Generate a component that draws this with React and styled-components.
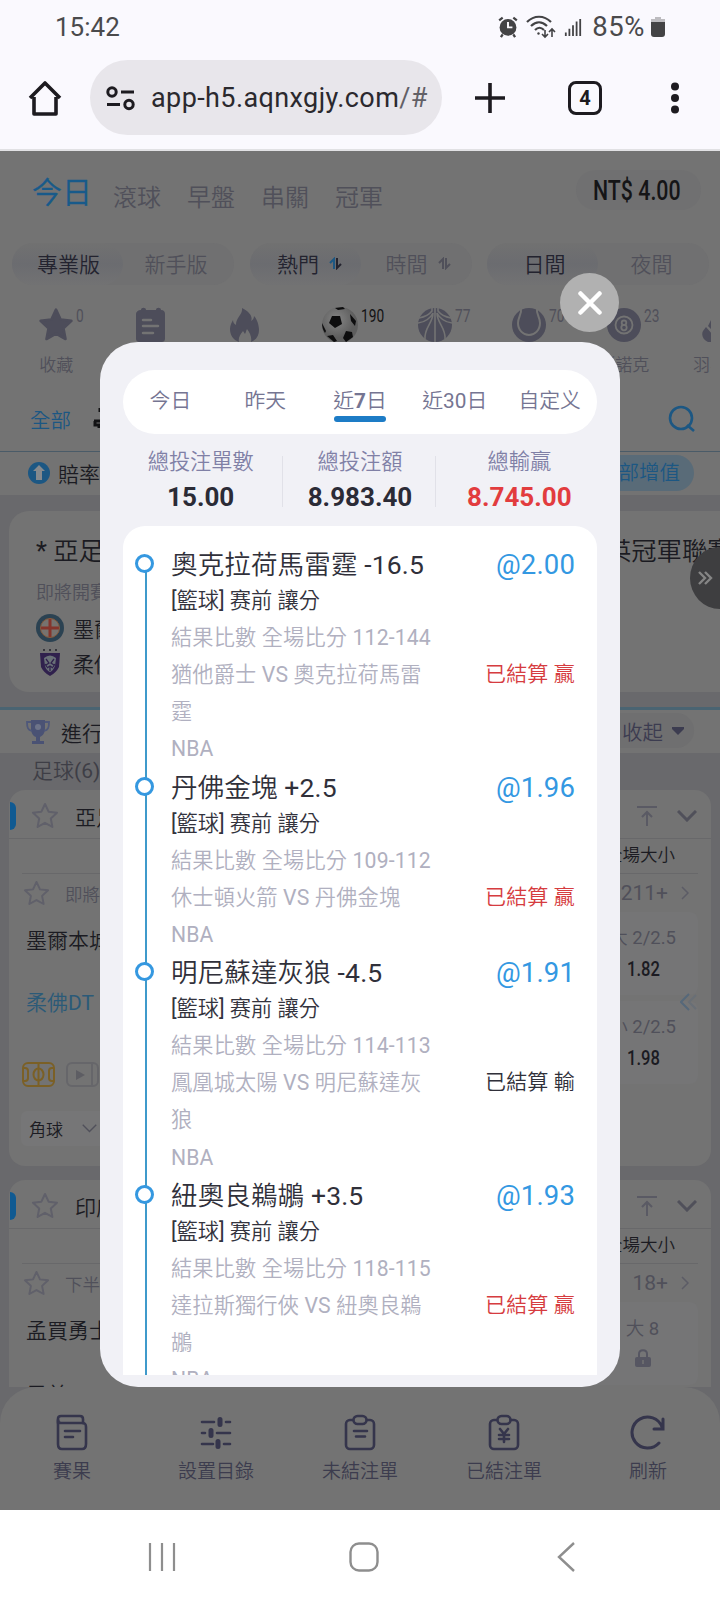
import styled, { createGlobalStyle } from "styled-components";

const GlobalStyle = createGlobalStyle`
    :root {
        --blue: #1c5783;
        --ink: #1b1b22;
        --grey: #50505a;
        --card: #737373;
        --base: #69696c;
        --line: #68686a;
    }

    *,
    *::before,
    *::after {
        box-sizing: border-box;
    }

    body {
        margin: 0;
        font-family: Roboto, "Noto Sans CJK TC DemiLight", "Noto Sans CJK TC", sans-serif;
    }

    p {
        margin: 0;
    }

    svg {
        display: block;
        flex-shrink: 0;
    }
`;

const Star = ({ size = 28, fill = "none", color = "#60606a" }) => (
    <svg width={size} height={size} viewBox="0 0 28 28" fill={fill} stroke={color} strokeWidth="2" strokeLinejoin="round">
        <path d="M14 2l3.6 7.7 8.4 1-6.200 5.800 1.600 8.400-7.400-4.100-7.400 4.100 1.600-8.400L2 10.700l8.400-1z" />
    </svg>
);

const SortIcon = ({ left, right }) => (
    <svg width="13" height="13" viewBox="0 0 13 13" fill="none" strokeWidth="2">
        <path d="M5 12V2L1 6" stroke={left} />
        <path d="M8 1v10l4-4" stroke={right} />
    </svg>
);

const NoteIcon = () => (
    <svg width="34" height="36" viewBox="0 0 34 36">
        <path d="M7 3c0-3 5-3 5 0h10c0-3 5-3 5 0 3 0 4 2 4 4v24c0 3-1 4-4 4H6c-3 0-4-1-4-4V7c0-2 2-4 5-4z" fill="#4d4d5a" />
        <path d="M9 13h8M9 19h15M9 26h10" stroke="#737373" strokeWidth="2.500" strokeLinecap="round" />
    </svg>
);

const FireIcon = () => (
    <svg width="34" height="36" viewBox="0 0 34 36" fill="#4d4d5a">
        <path d="M14 1c8 4 11 9 9 13 2-1 3-3 3-5 3 3 5 9 5 14 0 6-3 10-8 12 1-5-1-9-4-13-1 2-1 3-2 5l-2-3c-3 4-5 7-4 11C5 33 2 28 2 22c0-4 2-7 3-9 0 2 1 4 3 5 0-8 7-10 6-17z" />
    </svg>
);

const FootballIcon = () => (
    <svg width="38" height="38" viewBox="0 0 38 38">
        <defs>
            <radialGradient id="ball" cx="40%" cy="35%">
                <stop offset="0" stopColor="#858585" />
                <stop offset="1" stopColor="#5e5e5e" />
            </radialGradient>
        </defs>
        <circle cx="19" cy="19" r="18" fill="url(#ball)" />
        <path d="M11 10l8 0 2 8-7 4-6-5zM29 8l6 7-1 5-4-5zM25 25l6 1 1 5-7 5-3-4zM1 17l4 8-1 2c-2-3-3-6-3-10zM12 29l4 6-3 1-7-6zM14 2l8-1 2 2-7 1z" fill="#0d0d0e" />
    </svg>
);

const BasketballIcon = () => (
    <svg width="36" height="36" viewBox="0 0 36 36">
        <circle cx="18" cy="18" r="17" fill="#4d4d5a" />
        <path d="M18 1v34M15 0v4C12 8 7 10 2 11M21 0v4c3 4 8 6 13 7M1 16C8 15 13 12 16 6c0 10-9 15-8 26M35 16c-7-1-12-4-15-10 0 10 9 15 8 26" stroke="#737373" strokeWidth="1.600" fill="none" />
    </svg>
);

const TennisIcon = () => (
    <svg width="36" height="36" viewBox="0 0 36 36">
        <circle cx="18" cy="18" r="17" fill="#4d4d5a" />
        <path d="M10 1c1 6-3 9-3 15 0 7 5 12 11 12s11-5 11-12c0-6-4-9-3-15" stroke="#737373" strokeWidth="2" fill="none" />
    </svg>
);

const SnookerIcon = () => (
    <svg width="36" height="36" viewBox="0 0 36 36">
        <circle cx="18" cy="18" r="17" fill="#4d4d5a" />
        <g stroke="#737373" strokeWidth="1.800" fill="none">
            <circle cx="18" cy="18" r="8.500" />
            <circle cx="18" cy="15.800" r="2.300" />
            <circle cx="18" cy="20.600" r="2.700" />
        </g>
    </svg>
);

const ShuttleIcon = () => (
    <svg width="36" height="36" viewBox="0 0 36 36" fill="#4d4d5a">
        <path d="M12 11v12l-4-4zM3 24l3-4 6 7v8H8c-5-2-7-7-5-11z" />
    </svg>
);

const Chevron = ({ w = 20, h = 12, color = "#50505a", stroke = 3 }) => (
    <svg width={w} height={h} viewBox="0 0 20 12" fill="none" stroke={color} strokeWidth={stroke}>
        <path d="M1 1l9 9 9-9" />
    </svg>
);

const ArrowRight = () => (
    <svg width="8" height="14" viewBox="0 0 8 14" fill="none" stroke="#5c5c66" strokeWidth="1.500">
        <path d="M1 1l6 6-6 6" />
    </svg>
);

const TopIcon = () => (
    <svg width="20" height="22" viewBox="0 0 20 22" fill="none" stroke="#5a5a64" strokeWidth="2">
        <path d="M0 2h20M10 21V7M5 12l5-5 5 5" />
    </svg>
);

const topTabs = ["滾球", "早盤", "串關", "冠軍"];

const sports = [
    { key: 1, icon: <Star size={36} fill="#4d4d5a" color="#4d4d5a" />, count: "0", label: "收藏" },
    { key: 2, icon: <NoteIcon /> },
    { key: 3, icon: <FireIcon /> },
    { key: 4, icon: <FootballIcon />, count: "190", active: true },
    { key: 5, icon: <BasketballIcon />, count: "77" },
    { key: 6, icon: <TennisIcon />, count: "70" },
    { key: 7, icon: <SnookerIcon />, count: "23", label: "斯諾克" },
    { key: 8, icon: <ShuttleIcon />, label: "羽毛球" },
];

const rangeTabs = ["今日", "昨天", "近7日", "近30日", "自定义"];

const bets = [
    { key: 1, title: "奧克拉荷馬雷霆 -16.5", odds: "@2.00", score: "112-144", match: "猶他爵士 VS 奧克拉荷馬雷霆", win: true },
    { key: 2, title: "丹佛金塊 +2.5", odds: "@1.96", score: "109-112", match: "休士頓火箭 VS 丹佛金塊", win: true },
    { key: 3, title: "明尼蘇達灰狼 -4.5", odds: "@1.91", score: "114-113", match: "鳳凰城太陽 VS 明尼蘇達灰狼", win: false },
    { key: 4, title: "紐奧良鵜鶘 +3.5", odds: "@1.93", score: "118-115", match: "達拉斯獨行俠 VS 紐奧良鵜鶘", win: true },
];

const navItems = [
    {
        key: 1,
        text: "賽果",
        icon: (
            <>
                <path d="M4 9V5c0-2 1-3 3-3h19c2 0 3 1 3 3v4" />
                <path d="M4 7v23c0 3 1 5 4 5h20c3 0 4-2 4-5V13c0-3-1-4-4-4H7c-2 0-3-1-3-3z" />
                <path d="M11 17h15M11 23h8" />
            </>
        ),
    },
    {
        key: 2,
        text: "設置目錄",
        icon: (
            <>
                <path d="M4 8h12M28 8h4M4 19h3M19 19h13M4 30h11M26 30h6" />
                <path d="M22 5.500v5M13 16.500v5M20 27.500v5" strokeWidth="5" />
            </>
        ),
    },
    {
        key: 3,
        text: "未結注單",
        icon: (
            <>
                <rect x="4" y="6" width="28" height="29" rx="4" />
                <rect x="11.500" y="2" width="13" height="8" rx="4" fill="#737373" />
                <path d="M12 17h13M14 22.500h9" />
            </>
        ),
    },
    {
        key: 4,
        text: "已結注單",
        icon: (
            <>
                <rect x="4" y="6" width="28" height="29" rx="4" />
                <rect x="11.500" y="2" width="13" height="8" rx="4" fill="#737373" />
                <path d="M14 15l4 5 4-5M13 21h10M13 25h10M18 20v8" />
            </>
        ),
    },
    {
        key: 5,
        text: "刷新",
        icon: <path d="M32 13A15.500 15.500 0 1 0 29 29M24 15h9V5" strokeWidth="3" strokeLinejoin="miter" />,
    },
];

const League = ({ name, status, more, home, away, children, footer }) => (
    <LeagueCard>
        <LeagueHead>
            <i />
            <Star />
            <p>{name}</p>
            <TopIcon />
            <Chevron />
        </LeagueHead>
        <MarketHead>全場大小</MarketHead>
        <MatchHead>
            <Star size={27} />
            <p className="status">{status}</p>
            <p className="more">{more}</p>
            <ArrowRight />
        </MatchHead>
        <MatchBody>
            <Teams>
                <p>{home}</p>
                {away}
                {footer}
            </Teams>
            <OddsColumn>{children}</OddsColumn>
        </MatchBody>
    </LeagueCard>
);

const App = () => {
    return (
        <Phone>
            <GlobalStyle />
            <StatusBar>
                <p>15:42</p>
                <div>
                    <svg width="20" height="23" viewBox="0 0 22 26" fill="none">
                        <circle cx="11" cy="14" r="9.500" fill="#434345" />
                        <path d="M1 6l4-3M21 6l-4-3M5 22l-2 3M17 22l2 3" stroke="#434345" strokeWidth="2.600" />
                        <path d="M11 8v6h5" stroke="#faf9fe" strokeWidth="2.200" />
                    </svg>
                    <svg width="30" height="24" viewBox="0 0 30 24" fill="none" stroke="#434345" strokeWidth="2.200">
                        <path d="M1 7c7-7 17-7 24 0M5 11c5-5 11-5 16 0M9 15c3-3 6-3 9 0" />
                        <path d="M19 15v7M16 19l3 3 3-3M26 22v-8M23 17l3-3 3 3" strokeWidth="1.600" />
                        <circle cx="12.500" cy="18.500" r="1.200" fill="#434345" stroke="none" />
                    </svg>
                    <svg width="18" height="20" viewBox="0 0 20 20" stroke="#434345" strokeWidth="2">
                        <path d="M2 16v4M6 12v8M10 8v12M14 4v16M18 1v19" />
                    </svg>
                    <p>85%</p>
                    <svg width="14" height="20" viewBox="0 0 14 20">
                        <path d="M4 0h6v2h4v4H0V2h4z" fill="#bdbcc0" />
                        <path d="M0 5h14v12q0 3-3 3H3q-3 0-3-3z" fill="#434345" />
                    </svg>
                </div>
            </StatusBar>
            <Browser>
                <svg width="34" height="36" viewBox="0 0 34 36" fill="none" stroke="#1d1b20" strokeWidth="3.600" strokeLinejoin="round">
                    <path d="M2 18L17 3l15 15M6 17v17h22V17" />
                </svg>
                <UrlBar>
                    <svg width="29" height="26" viewBox="0 0 29 26" fill="none" stroke="#1d1b20" strokeWidth="3">
                        <circle cx="6" cy="7" r="4.200" />
                        <circle cx="23" cy="19.500" r="4.200" />
                        <path d="M15 7h13M1 19.500h13" />
                    </svg>
                    <p>
                        app-h5.aqnxgjy.com<span>/#</span>
                    </p>
                </UrlBar>
                <svg className="plus" width="30" height="30" viewBox="0 0 30 30" stroke="#1d1b20" strokeWidth="3.600">
                    <path d="M15 0v30M0 15h30" />
                </svg>
                <TabCount>4</TabCount>
                <svg width="10" height="32" viewBox="0 0 10 32" fill="#1d1b20">
                    <circle cx="5" cy="4.500" r="4" />
                    <circle cx="5" cy="16" r="4" />
                    <circle cx="5" cy="27.500" r="4" />
                </svg>
            </Browser>

            <Page>
                <TopTabs>
                    <p className="active">今日</p>
                    {topTabs.map((text) => (
                        <p key={text}>{text}</p>
                    ))}
                    <Balance>
                        <Condensed $size={27} $width={86}>NT$ 4.00</Condensed>
                    </Balance>
                </TopTabs>
                <Segments>
                    <Segment>
                        <SegmentItem $active $shift={2}>專業版</SegmentItem>
                        <SegmentItem $shift={-5}>新手版</SegmentItem>
                    </Segment>
                    <Segment>
                        <SegmentItem $active $shift={9}>
                            熱門 <SortIcon left="#1c5783" right="#23232f" />
                        </SegmentItem>
                        <SegmentItem $shift={4}>
                            時間 <SortIcon left="#50505a" right="#50505a" />
                        </SegmentItem>
                    </Segment>
                    <Segment>
                        <SegmentItem $active $shift={4}>日間</SegmentItem>
                        <SegmentItem $shift={-4}>夜間</SegmentItem>
                    </Segment>
                </Segments>
                <Sports>
                    {sports.map((sport) => (
                        <Sport key={sport.key} $active={sport.active}>
                            <div>
                                {sport.icon}
                                {sport.count && <span>{sport.count}</span>}
                            </div>
                            <p>{sport.label}</p>
                        </Sport>
                    ))}
                </Sports>
                <Filter>
                    <p>全部</p>
                    <svg width="16" height="24" viewBox="0 0 16 24" fill="none" stroke="#121214" strokeWidth="3">
                        <path d="M8 1v4M2 14h12M3 14v4h4v3" />
                    </svg>
                    <svg className="search" width="28" height="28" viewBox="0 0 28 28" fill="none" stroke="#1c5783" strokeWidth="2.600">
                        <circle cx="14" cy="13" r="11" />
                        <path d="M20 20l7 6" />
                    </svg>
                </Filter>
                <OddsBar>
                    <svg width="22" height="22" viewBox="0 0 22 22">
                        <circle cx="11" cy="11" r="11" fill="#1c5783" />
                        <path d="M11 3l6 6h-3v9H8V9H5z" fill="#85898d" />
                    </svg>
                    <p>賠率</p>
                    <span>全部增值</span>
                </OddsBar>
                <Featured>
                    <FeaturedCard>
                        <div className="title">
                            <p>* 亞足</p>
                            <p>英冠軍聯賽</p>
                        </div>
                        <p className="time">即將開賽</p>
                        <div className="team">
                            <svg width="28" height="28" viewBox="0 0 28 28">
                                <circle cx="14" cy="14" r="14" fill="#2b4252" />
                                <circle cx="14" cy="14" r="9.500" fill="#77736f" />
                                <path d="M14 5v18M5 14h18" stroke="#85352c" strokeWidth="3" />
                                <circle cx="14" cy="14" r="9.500" fill="none" stroke="#85593b" strokeWidth="1" />
                            </svg>
                            <p>墨爾</p>
                        </div>
                        <div className="team">
                            <svg width="28" height="28" viewBox="0 0 28 28">
                                <path d="M4 4h20l-1 14q-3 6-9 9-6-3-9-9z" fill="#30214d" />
                                <path d="M8 9q6-5 12 0l-1 8q-2 5-5 6-4-2-5-6z" fill="#697077" />
                                <path d="M10 10l3 4-3 2M18 10l-3 4 3 2M11 19l3-2 3 2M14 17v5M9 15l2 3M19 15l-2 3" stroke="#30214d" strokeWidth="1.300" fill="none" />
                                <path d="M7 1h2M13 1h2M19 1h2" stroke="#35353c" strokeWidth="2" />
                            </svg>
                            <p>柔佛</p>
                        </div>
                    </FeaturedCard>
                </Featured>
                <Running>
                    <svg width="26" height="26" viewBox="0 0 26 26">
                        <path d="M6 1h14v8c0 6-3 8-5 9v4h4v3H7v-3h4v-4c-3-1-5-4-5-9z" fill="#4a5274" />
                        <path d="M6 3H2c0 6 1 8 5 9M20 3h4c0 6-1 8-5 9" stroke="#4f587a" strokeWidth="1.800" fill="none" />
                        <circle cx="13" cy="8" r="3" fill="#6e7489" />
                    </svg>
                    <p>進行</p>
                    <span>
                        收起
                        <svg width="12" height="9" viewBox="0 0 12 9">
                            <path d="M0 1h12v2L6 9 0 3z" fill="#3c3c50" />
                        </svg>
                    </span>
                </Running>
                <Leagues>
                    <p className="group">足球(6)</p>
                    <League
                        name="亞足"
                        status="即將"
                        more="211+"
                        home="墨爾本城"
                        away={<p className="blue">柔佛DT</p>}
                        footer={
                            <>
                                <Media>
                                    <svg width="33" height="25" viewBox="0 0 33 25" fill="none" stroke="#7b6026" strokeWidth="2">
                                        <rect x="1" y="1" width="31" height="23" rx="5" />
                                        <path d="M16.500 1v23M1 6h2q3 0 3 3v7q0 3-3 3H1M32 6h-2q-3 0-3 3v7q0 3 3 3h2" />
                                        <ellipse cx="16.500" cy="12.500" rx="5" ry="6" />
                                    </svg>
                                    <svg width="33" height="25" viewBox="0 0 33 25" fill="none" stroke="#66666a" strokeWidth="2">
                                        <rect x="1" y="1" width="31" height="23" rx="5" />
                                        <path d="M26 1v23" />
                                        <path d="M10 8l9 5-9 5z" fill="#5d5d63" stroke="none" />
                                    </svg>
                                </Media>
                                <CornerSelect>
                                    角球 <Chevron w={15} h={9} stroke={1.8} />
                                </CornerSelect>
                            </>
                        }
                    >
                        <OddsBox>
                            <p>大 2/2.5</p>
                            <Condensed $size={21} $width={30}>1.82</Condensed>
                        </OddsBox>
                        <OddsBox>
                            <p>小 2/2.5</p>
                            <Condensed $size={21} $width={30}>1.98</Condensed>
                        </OddsBox>
                        <Swipe width="18" height="18" viewBox="0 0 18 18" fill="none" strokeWidth="2">
                            <path d="M9 1L1 9l8 8" stroke="#56687a" />
                            <path d="M16 2L9 9l7 7" stroke="#696f76" />
                        </Swipe>
                    </League>
                    <League name="印度" status="下半" more="18+" home="孟買勇士" away={<p className="next">果美ANV</p>}>
                        <OddsBox $locked>
                            <p>大 8</p>
                            <svg width="16" height="18" viewBox="0 0 16 18">
                                <path d="M4 9V5c0-5 8-5 8 0v4" stroke="#565662" strokeWidth="2" fill="none" />
                                <rect x="0" y="8" width="16" height="10" rx="2" fill="#565662" />
                                <path d="M8 11v4" stroke="#737373" strokeWidth="1.500" />
                            </svg>
                        </OddsBox>
                    </League>
                </Leagues>
                <BottomNav>
                    {navItems.map((item) => (
                        <NavItem key={item.key}>
                            <svg width="36" height="37" viewBox="0 0 36 37" fill="none" stroke="#35354c" strokeWidth="2.600" strokeLinecap="round" strokeLinejoin="round">
                                {item.icon}
                            </svg>
                            <p>{item.text}</p>
                        </NavItem>
                    ))}
                </BottomNav>
                <FloatButton>
                    <svg width="15" height="14" viewBox="0 0 15 14" fill="none" stroke="#858585" strokeWidth="2.400">
                        <path d="M1 1l6 6-6 6M7 1l6 6-6 6" />
                    </svg>
                </FloatButton>
            </Page>

            <SystemNav>
                <svg width="28" height="30" viewBox="0 0 28 30" stroke="#8e8e8e" strokeWidth="2.200">
                    <path d="M2 1v28M14 1v28M26 1v28" />
                </svg>
                <svg className="home" width="30" height="30" viewBox="0 0 30 30" fill="none" stroke="#8e8e8e" strokeWidth="2.400">
                    <rect x="1.500" y="1.500" width="27" height="27" rx="8.500" />
                </svg>
                <svg width="18" height="30" viewBox="0 0 18 30" fill="none" stroke="#8e8e8e" strokeWidth="2.400">
                    <path d="M17 1L2 15l15 14" />
                </svg>
            </SystemNav>

            <Modal>
                <CloseButton>
                    <svg width="24" height="24" viewBox="0 0 24 24" stroke="#fff" strokeWidth="4.500" strokeLinecap="round">
                        <path d="M2.500 2.500l19 19M21.500 2.500l-19 19" />
                    </svg>
                </CloseButton>
                <RangeTabs>
                    {rangeTabs.map((text, index) => (
                        <RangeTab key={text} $active={index === 2}>
                            {index === 2 ? (
                                <>
                                    近<b>7</b>日
                                </>
                            ) : (
                                text
                            )}
                        </RangeTab>
                    ))}
                </RangeTabs>
                <Summary>
                    <div>
                        <p>總投注單數</p>
                        <b>15.00</b>
                    </div>
                    <div className="middle">
                        <p>總投注額</p>
                        <b>8.983.40</b>
                    </div>
                    <div>
                        <p>總輸贏</p>
                        <b className="red">8.745.00</b>
                    </div>
                </Summary>
                <BetList>
                    {bets.map((bet) => (
                        <Bet key={bet.key}>
                            <BetRow $title>
                                <p>{bet.title}</p>
                                <span>{bet.odds}</span>
                            </BetRow>
                            <p className="type">[籃球] 赛前 讓分</p>
                            <p>結果比數 全場比分 {bet.score}</p>
                            <BetRow $win={bet.win}>
                                <p>{bet.match}</p>
                                <span>{bet.win ? "已結算 贏" : "已結算 輸"}</span>
                            </BetRow>
                            <p>NBA</p>
                        </Bet>
                    ))}
                </BetList>
            </Modal>
        </Phone>
    );
};

export default App;

const Phone = styled.div`
    position: relative;
    display: flex;
    flex-direction: column;
    width: 720px;
    height: 1600px;
    overflow: hidden;
    background: #fff;
`;

const StatusBar = styled.div`
    height: 53px;
    padding: 0 55px 0 55px;
    background: #faf9fe;
    color: #4a4a4c;
    font-size: 26px;
    display: flex;
    align-items: center;
    justify-content: space-between;

    div {
        display: flex;
        align-items: center;
        gap: 8px;
    }

    div p {
        margin: 0 -2px 0 2px;
        font-size: 27.500px;
        letter-spacing: 0.6px;
    }
`;

const Browser = styled.div`
    height: 98px;
    padding: 7px 40px 14px 28px;
    border-bottom: 2px solid #e1e1e4;
    background: #faf9fe;
    display: flex;
    align-items: center;

    .plus {
        margin-left: 33px;
    }

    > :last-child {
        margin-left: auto;
    }
`;

const UrlBar = styled.div`
    width: 352px;
    height: 75px;
    margin-left: 28px;
    padding-left: 16px;
    border-radius: 38px;
    background: #e8e6eb;
    display: flex;
    align-items: center;
    gap: 16px;
    font-size: 27px;
    letter-spacing: 0.4px;
    color: #2b292e;
    white-space: nowrap;

    span {
        color: #626066;
    }
`;

const TabCount = styled.div`
    width: 34px;
    height: 34px;
    margin-left: 63px;
    border: 3.5px solid #1d1b20;
    border-radius: 8px;
    display: flex;
    align-items: center;
    justify-content: center;
    font-size: 20px;
    font-weight: 700;
    color: #1d1b20;
`;

const Page = styled.div`
    position: relative;
    height: 1359px;
    overflow: hidden;
    background: var(--card);
    color: var(--ink);
    display: flex;
    flex-direction: column;
    white-space: nowrap;
`;

const Condensed = styled.b`
    display: block;
    width: ${(props) => props.$width}px;
    font-size: ${(props) => props.$size}px;
    line-height: 1.2;
    font-weight: 500;
    transform: scaleX(0.79);
    transform-origin: left;
`;

const TopTabs = styled.div`
    height: 84px;
    padding: 0 19px 0 32px;
    display: flex;
    align-items: center;
    gap: 26px;
    font-size: 24px;
    color: var(--grey);

    p {
        padding-top: 4px;
    }

    .active {
        margin-right: -5px;
        padding: 0 0 6px;
        font-size: 30px;
        color: #185a8a;
        -webkit-text-stroke: 0.3px #185a8a;
    }
`;

const Balance = styled.div`
    width: 125px;
    height: 40px;
    margin: 0 0 6px auto;
    padding: 3px 0 0 17px;
    border-radius: 20px;
    background: #707071;
    color: #151517;
    display: flex;
    align-items: center;
`;

const Segments = styled.div`
    height: 58px;
    padding: 8px 11px 8px 12px;
    display: flex;
    justify-content: space-between;
`;

const Segment = styled.div`
    width: 222px;
    border-radius: 21px;
    background: #707071;
    display: flex;
`;

const SegmentItem = styled.div`
    flex: 0 0 50%;
    padding-bottom: 2px;
    padding-left: ${(props) => Math.max(props.$shift, 0)}px;
    padding-right: ${(props) => Math.max(-props.$shift, 0)}px;
    border-radius: 21px;
    display: flex;
    align-items: center;
    justify-content: center;
    gap: 10px;
    font-size: 21px;
    color: ${(props) => (props.$active ? "#23232f" : "#50505a")};
    background: ${(props) => (props.$active ? "linear-gradient(#717171, #6b6c70 50%, #727273)" : "none")};
`;

const Sports = styled.div`
    height: 97px;
    width: 711px;
    padding: 13px 0 0 9px;
    overflow: hidden;
    display: flex;
`;

const Sport = styled.div`
    flex: 0 0 94.6px;
    display: flex;
    flex-direction: column;
    align-items: center;
    color: var(--grey);

    div {
        position: relative;
        height: 38px;
        display: flex;
        align-items: center;
    }

    span {
        position: absolute;
        left: 100%;
        top: 0;
        margin-left: 2px;
        font-size: 18.500px;
        line-height: 20px;
        color: ${(props) => (props.$active ? "#121214" : "#50505a")};
        transform: scaleX(0.74);
        transform-origin: left;
    }

    p {
        margin-top: 8px;
        font-size: 17px;
        line-height: 26px;
    }
`;

const Filter = styled.div`
    height: 62px;
    padding: 0 25px 3px 30px;
    border-bottom: 1px solid #4a5b68;
    display: flex;
    align-items: center;
    gap: 21px;
    font-size: 20.500px;
    color: var(--blue);

    .search {
        margin-left: auto;
    }
`;

const OddsBar = styled.div`
    height: 43px;
    padding: 0 26px 1px 28px;
    display: flex;
    align-items: center;
    gap: 8px;
    font-size: 21px;

    span {
        margin-left: auto;
        padding: 0 14px;
        border-radius: 18px;
        background: #596b78;
        color: var(--blue);
        font-size: 20.500px;
        line-height: 36px;
    }
`;

const Featured = styled.div`
    height: 212px;
    padding: 16px 0 15px 9px;
    background: var(--base);
`;

const FeaturedCard = styled.div`
    height: 181px;
    padding: 23px 0 0 27px;
    border-radius: 20px 0 0 20px;
    background: var(--card);
    display: flex;
    flex-direction: column;
    font-size: 21px;

    .title {
        height: 30px;
        display: flex;
        align-items: center;
        font-size: 25.300px;
    }

    .title p {
        flex: 0 0 570px;
    }

    .time {
        margin: 15px 0 4px;
        font-size: 18px;
        line-height: 27px;
        color: var(--grey);
    }

    .team {
        height: 35px;
        display: flex;
        align-items: center;
        gap: 9px;
    }
`;

const Running = styled.div`
    height: 46px;
    padding: 0 26px 0 25px;
    border-top: 3px solid #4a6472;
    display: flex;
    align-items: center;
    gap: 10px;
    font-size: 21px;

    span {
        height: 35px;
        margin: 0 0 2px auto;
        padding: 0 10px 0 20px;
        border-radius: 18px;
        background: #6f6f70;
        color: #3c3c50;
        font-size: 20.500px;
        display: flex;
        align-items: center;
        gap: 9px;
    }
`;

const Leagues = styled.div`
    height: 634px;
    padding: 0 9px;
    overflow: hidden;
    background: var(--base);

    .group {
        height: 37px;
        padding-left: 23px;
        font-size: 21px;
        line-height: 36px;
        color: #3e3e46;
    }
`;

const LeagueCard = styled.div`
    height: 376px;
    margin-bottom: 14px;
    border-radius: 16px;
    background: var(--card);
`;

const LeagueHead = styled.div`
    height: 49px;
    padding: 3px 14px 0 0;
    border-bottom: 1px solid var(--line);
    display: flex;
    align-items: center;
    font-size: 21px;

    i {
        width: 6px;
        height: 28px;
        margin: 0 15px 0 1px;
        border-radius: 0 8px 8px 0;
        background: #105a92;
    }

    p {
        margin: 0 auto 0 16px;
    }

    > :last-child {
        margin-left: 20px;
    }
`;

const MarketHead = styled.div`
    height: 35px;
    margin: 0 13px;
    padding-right: 23px;
    border-bottom: 1px solid var(--line);
    text-align: right;
    font-size: 17.500px;
    line-height: 32px;
`;

const MatchHead = styled.div`
    height: 38px;
    padding: 0 22px 0 14px;
    display: flex;
    align-items: center;
    color: var(--grey);

    .status {
        margin-left: 15px;
        font-size: 17.500px;
    }

    .more {
        margin: 0 13px 0 auto;
        font-size: 21px;
    }
`;

const MatchBody = styled.div`
    display: flex;
    justify-content: space-between;
    padding: 0 13px 0 17px;
`;

const Teams = styled.div`
    width: 120px;
    padding-top: 13px;
    font-size: 21px;

    p {
        height: 62px;
        line-height: 32px;
    }

    p.blue {
        color: #2b5a78;
    }

    p.next {
        padding-top: 2px;
    }
`;

const Media = styled.div`
    display: flex;
    gap: 11px;
    margin: 13px 0 0 -4px;
`;

const CornerSelect = styled.div`
    width: 92px;
    height: 35px;
    margin: 24px 0 0 -5px;
    padding-left: 8px;
    border-radius: 6px;
    background: #767677;
    display: flex;
    align-items: center;
    gap: 19px;
    font-size: 17px;
`;

const OddsColumn = styled.div`
    position: relative;
    width: 130px;
    display: flex;
    flex-direction: column;
    gap: 6px;
`;

const OddsBox = styled.div`
    height: 83px;
    padding: ${(props) => (props.$locked ? "14px 0 0 19px" : "13px 12px 0 0")};
    border-radius: 8px;
    background: #757576;
    display: flex;
    flex-direction: column;
    align-items: ${(props) => (props.$locked ? "center" : "flex-end")};
    gap: ${(props) => (props.$locked ? "6px" : "5px")};
    font-size: 18.500px;
    color: var(--grey);

    p {
        margin-right: ${(props) => (props.$locked ? "0" : "10px")};
        line-height: 27px;
    }

    b {
        margin-right: 29px;
        color: var(--ink);
    }
`;

const Swipe = styled.svg`
    position: absolute;
    right: 0;
    top: 81px;
`;

const BottomNav = styled.div`
    height: 123px;
    padding-top: 27px;
    border-radius: 36px 36px 0 0;
    background: var(--card);
    box-shadow: 0 0 0 36px var(--base);
    clip-path: inset(0);
    display: flex;
`;

const NavItem = styled.div`
    flex: 1;
    display: flex;
    flex-direction: column;
    align-items: center;
    color: #3c3c4e;

    p {
        margin-top: 7px;
        font-size: 19px;
        line-height: 27px;
    }
`;

const FloatButton = styled.div`
    position: absolute;
    right: -30px;
    top: 396px;
    width: 60px;
    height: 62px;
    padding-left: 8px;
    border-radius: 50%;
    background: #3e3e40;
    display: flex;
    align-items: center;
`;

const SystemNav = styled.div`
    height: 90px;
    padding: 4px 145px 0 148px;
    display: flex;
    align-items: center;
    justify-content: space-between;

    .home {
        margin-right: 6px;
    }
`;

const Modal = styled.div`
    position: absolute;
    left: 100px;
    top: 342px;
    width: 520px;
    height: 1045px;
    padding: 28px 23px 12px;
    border-radius: 38px;
    background: #f1f1f6;
    display: flex;
    flex-direction: column;
`;

const CloseButton = styled.div`
    position: absolute;
    left: 460px;
    top: -69px;
    width: 59px;
    height: 59px;
    border-radius: 50%;
    background: #b1b1b1;
    display: flex;
    align-items: center;
    justify-content: center;
`;

const RangeTabs = styled.div`
    height: 64px;
    flex-shrink: 0;
    border-radius: 32px;
    background: #fff;
    display: flex;
`;

const RangeTab = styled.div`
    flex: 1;
    text-align: center;
    font-size: 20.800px;
    line-height: 32px;
    padding-top: 15px;
    color: #757592;

    &::after {
        content: "";
        display: ${(props) => (props.$active ? "block" : "none")};
        width: 52px;
        height: 6px;
        margin: -1px auto 0;
        border-radius: 3px;
        background: #1d7cc6;
    }
`;

const Summary = styled.div`
    height: 92px;
    margin: 0 -2px;
    flex-shrink: 0;
    display: flex;

    div {
        flex: 1 0 0;
        display: flex;
        flex-direction: column;
        align-items: center;
        padding-top: 11px;
    }

    .middle {
        background: linear-gradient(#e1e1e8, #e1e1e8) 2px 22px / 1px 51px no-repeat,
            linear-gradient(#e1e1e8, #e1e1e8) 155px 22px / 1px 51px no-repeat;
    }

    p {
        font-size: 21.200px;
        line-height: 33px;
        color: #8080a6;
    }

    b {
        font-size: 26px;
        line-height: 38px;
        color: #2b2b36;
    }

    .red {
        color: #e23c3e;
    }
`;

const BetList = styled.div`
    flex: 1;
    padding: 20px 22px 0 48px;
    border-radius: 22px 22px 0 0;
    background: #fff;
    overflow: hidden;
`;

const Bet = styled.div`
    position: relative;
    padding-bottom: 1px;
    font-size: 21.200px;
    line-height: 37.100px;
    letter-spacing: 0.15px;
    color: #b0b0c0;

    /* timeline */
    &::before {
        content: "";
        position: absolute;
        left: -26px;
        top: 18px;
        bottom: -18px;
        width: 2px;
        background: #3f9acb;
    }

    &::after {
        content: "";
        position: absolute;
        left: -36px;
        top: 8px;
        width: 19px;
        height: 19px;
        border: 3px solid #3598e0;
        border-radius: 50%;
        background: #fff;
    }

    .type {
        margin-top: -1px;
        letter-spacing: 0;
        color: #33333d;
    }
`;

const BetRow = styled.div`
    display: flex;
    justify-content: space-between;
    font-size: ${(props) => (props.$title ? "26.500px" : "inherit")};
    color: ${(props) => (props.$title ? "#30303a" : "inherit")};

    p {
        width: ${(props) => (props.$title ? "auto" : "264px")};
    }

    span {
        font-size: ${(props) => (props.$title ? "27.500px" : "21px")};
        color: ${(props) => (props.$title ? "#3398e2" : props.$win ? "#d63c40" : "#30303a")};
    }
`;
